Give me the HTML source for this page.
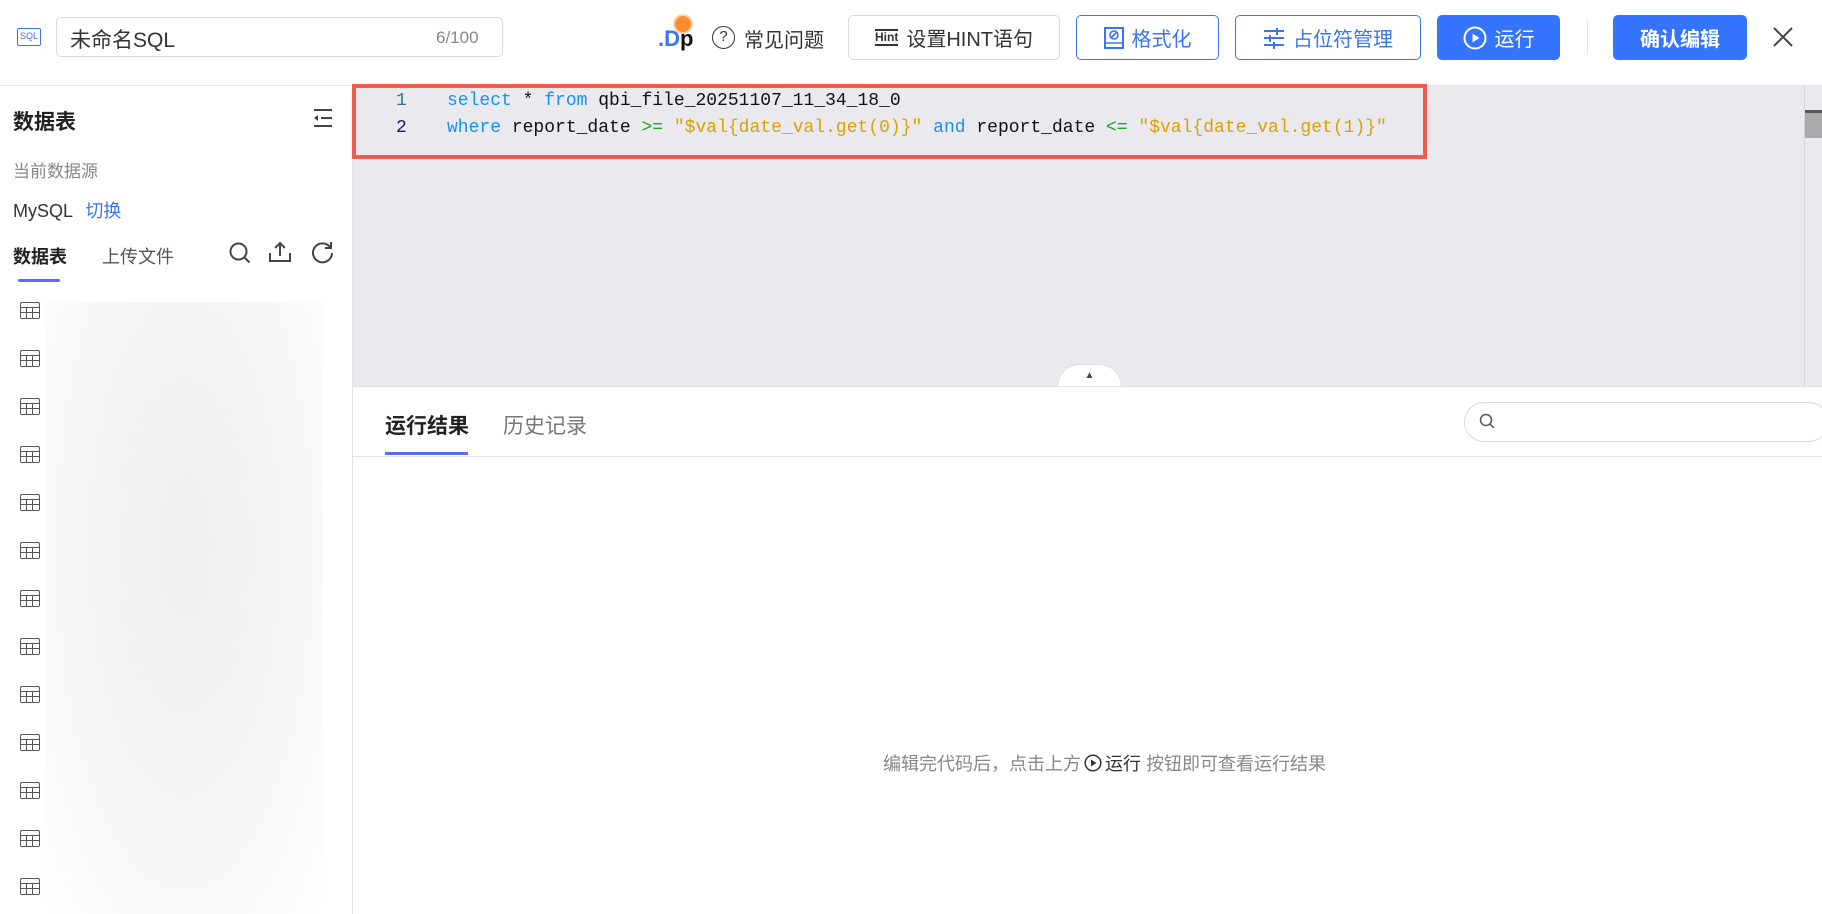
<!DOCTYPE html>
<html><head><meta charset="utf-8"><style>
*{box-sizing:border-box;margin:0;padding:0}
body{width:1822px;height:914px;overflow:hidden;background:#fff;font-family:"Liberation Sans","Noto Sans CJK SC",sans-serif;color:#333;position:relative}
.a{position:absolute}
.btn{position:absolute;top:15px;height:45px;border-radius:5px;font-size:20px;display:flex;align-items:center;justify-content:center;gap:8px}
.code{font-family:"Liberation Mono","DejaVu Sans Mono",monospace;font-size:18px;white-space:pre}
.kw{color:#1593f0}.st{color:#dba100}.op{color:#22a32a}
.ti{position:absolute;left:20px;width:20px;height:17px;border:1.6px solid #555;border-radius:2px;background:
linear-gradient(#555,#555) 0 4px/100% 1.4px no-repeat,linear-gradient(#555,#555) 0 9px/100% 1.2px no-repeat,linear-gradient(#555,#555) 5px 4px/1.2px 100% no-repeat,linear-gradient(#555,#555) 11px 4px/1.2px 100% no-repeat}
</style></head><body>
<!-- header -->
<div class="a" style="left:17px;top:28px;width:24px;height:18px;border:1.5px solid #3a74f5;border-radius:2px;font-size:9px;color:#3a74f5;text-align:center;line-height:15px">SQL</div>
<div class="a" style="left:56px;top:17px;width:447px;height:40px;border:1px solid #d9d9d9;border-radius:5px"></div>
<div class="a" style="left:70px;top:24px;font-size:21px;color:#333">未命名SQL</div>
<div class="a" style="left:436px;top:28px;font-size:17px;color:#888">6/100</div>
<div class="a" style="left:658px;top:26px;font-size:22px;font-weight:bold"><span style="color:#3a74f5">.D</span><span style="color:#111">p</span></div>
<div class="a" style="left:675px;top:16px;width:16px;height:16px;border-radius:50%;background:#ff8c2e;box-shadow:0 0 0 2px #ffd3ae"></div>
<div class="a" style="left:712px;top:26px;width:23px;height:23px;border:1.8px solid #333;border-radius:50%;font-size:15px;text-align:center;line-height:20px">?</div>
<div class="a" style="left:744px;top:24px;font-size:20px">常见问题</div>
<div class="btn" style="left:848px;width:212px;border:1px solid #d9d9d9;color:#333"><span style="font-size:12px;font-weight:bold;border-bottom:2px solid #333;border-top:2px solid #333;line-height:13px">Hint</span>设置HINT语句</div>
<div class="btn" style="left:1076px;width:143px;border:1px solid #3a74f5;color:#3a74f5"><svg width="20" height="22" viewBox="0 0 20 22"><rect x="1" y="1" width="18" height="20" fill="none" stroke="#3a74f5" stroke-width="2"/><circle cx="10" cy="8" r="4" fill="none" stroke="#3a74f5" stroke-width="1.6"/><path d="M7.5 10.5l5-5M1 16h18" stroke="#3a74f5" stroke-width="1.6"/></svg>格式化</div>
<div class="btn" style="left:1235px;width:186px;border:1px solid #3a74f5;color:#3a74f5"><svg width="22" height="22" viewBox="0 0 22 22" stroke="#3a74f5" stroke-width="2"><path d="M1 4h20M1 11h20M1 18h20M14 1v7M7 8v7M11 15v7"/></svg>占位符管理</div>
<div class="btn" style="left:1437px;width:123px;background:#3574ff;color:#fff"><svg width="24" height="24" viewBox="0 0 24 24"><circle cx="12" cy="12" r="10.5" fill="none" stroke="#fff" stroke-width="2"/><path d="M9.5 7.5v9l7-4.5z" fill="#fff"/></svg>运行</div>
<div class="a" style="left:1587px;top:20px;width:1px;height:34px;background:#e5e5e5"></div>
<div class="btn" style="left:1613px;width:134px;background:#3574ff;color:#fff;font-weight:bold">确认编辑</div>
<svg class="a" style="left:1773px;top:27px" width="20" height="20" viewBox="0 0 20 20"><path d="M1 1l18 18M19 1L1 19" stroke="#444" stroke-width="2"/></svg>
<div class="a" style="left:0;top:85px;width:1822px;height:1px;background:#e3e3e3"></div>
<!-- sidebar -->
<div class="a" style="left:352px;top:85px;width:1px;height:829px;background:#e3e3e3"></div>
<div class="a" style="left:13px;top:106px;font-size:21px;font-weight:bold;color:#222">数据表</div>
<svg class="a" style="left:313px;top:109px" width="20" height="18" viewBox="0 0 20 18" stroke="#444" stroke-width="2"><path d="M1 1h18M8 9h11M1 17h18"/><path d="M5 6l-4 3 4 3z" fill="#444" stroke="none"/></svg>
<div class="a" style="left:13px;top:157px;font-size:17px;color:#888">当前数据源</div>
<div class="a" style="left:13px;top:197px;font-size:18px;color:#333">MySQL <span style="color:#3a74f5;margin-left:8px">切换</span></div>
<div class="a" style="left:13px;top:243px;font-size:18px;font-weight:bold;color:#222">数据表</div>
<div class="a" style="left:102px;top:243px;font-size:18px;color:#555">上传文件</div>
<div class="a" style="left:18px;top:279px;width:42px;height:3px;background:#5b6cf7;border-radius:2px"></div>
<svg class="a" style="left:229px;top:242px" width="22" height="22" viewBox="0 0 22 22" fill="none" stroke="#444" stroke-width="2"><circle cx="9.5" cy="9.5" r="8"/><path d="M15.5 15.5l5 5"/></svg>
<svg class="a" style="left:269px;top:241px" width="22" height="22" viewBox="0 0 22 22" fill="none" stroke="#444" stroke-width="2"><path d="M1 12v8h20v-8M11 15V2M6 7l5-5 5 5"/></svg>
<svg class="a" style="left:311px;top:241px" width="23" height="23" viewBox="0 0 23 23" fill="none" stroke="#444" stroke-width="2"><path d="M19 6A9.5 9.5 0 1 0 21 12"/><path d="M20 1v6h-6"/></svg>
<div class="a" style="left:46px;top:302px;width:277px;height:612px;background:radial-gradient(ellipse at 50% 40%,#f0f0f0 0%,#f4f4f4 40%,#fbfbfb 80%,#fff 100%)"></div>
<div class="ti" style="top:302px"></div><div class="ti" style="top:350px"></div><div class="ti" style="top:398px"></div><div class="ti" style="top:446px"></div><div class="ti" style="top:494px"></div><div class="ti" style="top:542px"></div><div class="ti" style="top:590px"></div><div class="ti" style="top:638px"></div><div class="ti" style="top:686px"></div><div class="ti" style="top:734px"></div><div class="ti" style="top:782px"></div><div class="ti" style="top:830px"></div><div class="ti" style="top:878px"></div>
<!-- editor -->
<div class="a" style="left:353px;top:86px;width:1469px;height:300px;background:#e9e9ee"></div>
<div class="a" style="left:1804px;top:86px;width:1px;height:300px;background:#d5d5d8"></div>
<div class="a" style="left:1805px;top:110px;width:17px;height:28px;background:#aaa;border-top:3px solid #555"></div>
<div class="a" style="left:352px;top:84px;width:1075px;height:75px;border:4px solid #f25a4d"></div>
<div class="a code" style="left:396px;top:91px;color:#237893">1</div>
<div class="a code" style="left:396px;top:118px;color:#0b216f">2</div>
<div class="a code" style="left:447px;top:91px;color:#111"><span class="kw">select</span> * <span class="kw">from</span> qbi_file_20251107_11_34_18_0</div>
<div class="a code" style="left:447px;top:118px;color:#111"><span class="kw">where</span> report_date <span class="op">&gt;=</span> <span class="st">"$val{date_val.get(0)}"</span> <span class="kw">and</span> report_date <span class="op">&lt;=</span> <span class="st">"$val{date_val.get(1)}"</span></div>
<div class="a" style="left:1057px;top:364px;width:65px;height:23px;background:#fff;border-radius:30px 30px 0 0;border:1px solid #e0e0e0;border-bottom:none;text-align:center;font-size:10px;color:#444;line-height:22px">▲</div>
<div class="a" style="left:353px;top:386px;width:1469px;height:1px;background:#e0e0e0"></div>
<!-- results -->
<div class="a" style="left:385px;top:410px;font-size:21px;font-weight:bold;color:#222">运行结果</div>
<div class="a" style="left:503px;top:410px;font-size:21px;color:#777">历史记录</div>
<div class="a" style="left:385px;top:452px;width:83px;height:3px;background:#5b6cf7"></div>
<div class="a" style="left:353px;top:456px;width:1469px;height:1px;background:#e3e3e3"></div>
<div class="a" style="left:1464px;top:402px;width:365px;height:40px;border:1px solid #d9d9d9;border-radius:20px"></div>
<svg class="a" style="left:1479px;top:413px" width="16" height="16" viewBox="0 0 16 16" fill="none" stroke="#555" stroke-width="1.5"><circle cx="7" cy="7" r="5.5"/><path d="M11 11l4 4"/></svg>
<div class="a" style="left:883px;top:750px;font-size:18px;color:#888;white-space:nowrap;display:flex;align-items:center">编辑完代码后，点击上方<svg style="margin:0 3px" width="18" height="18" viewBox="0 0 18 18"><circle cx="9" cy="9" r="7.8" fill="none" stroke="#333" stroke-width="1.5"/><path d="M7 5.5v7l5.5-3.5z" fill="#333"/></svg><span style="color:#333">运行</span>&nbsp;按钮即可查看运行结果</div>
</body></html>
